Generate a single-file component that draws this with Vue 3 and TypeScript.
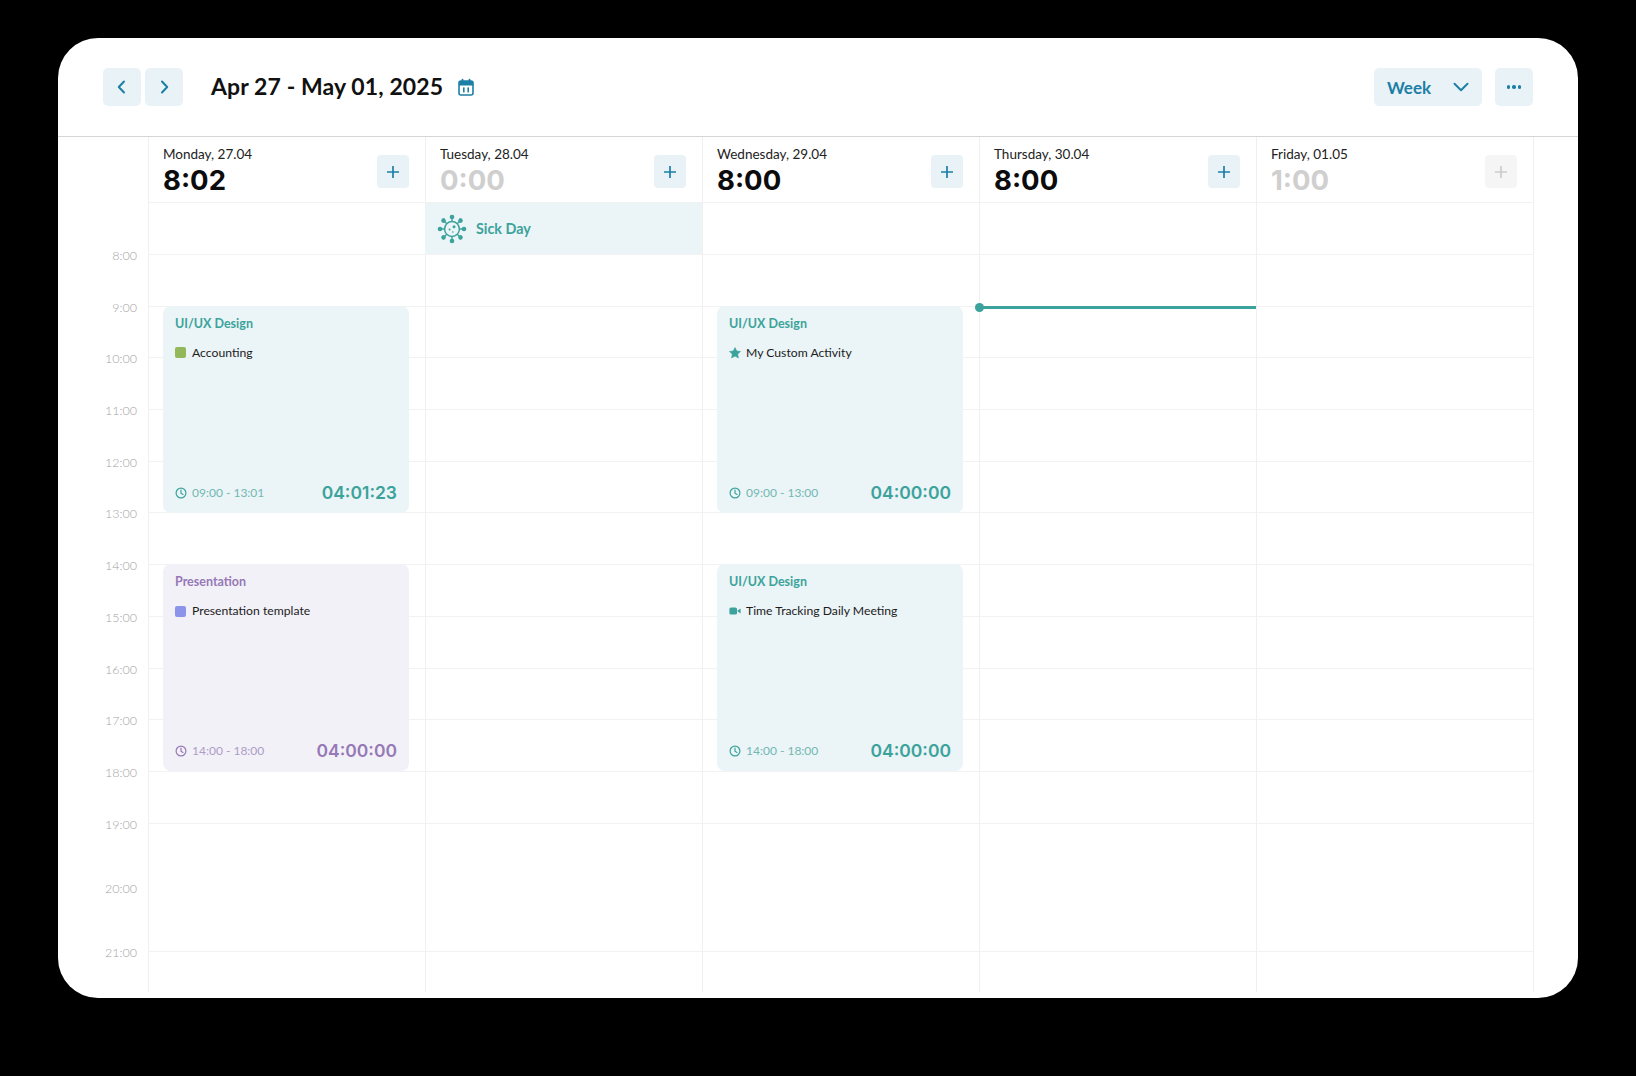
<script setup lang="ts">
interface IRow {
  label: string,
  height: number,
  line: boolean
}

interface IEvent {
  project: string,
  activity: string,
  icon: 'square' | 'star' | 'video',
  iconColor?: string,
  range: string,
  total: string,
  tone: 'teal' | 'purple',
  row: number
}

interface IDay {
  name: string,
  total: string,
  muted?: boolean,
  locked?: boolean,
  sick?: boolean,
  now?: number,
  events: IEvent[]
}

const rows: IRow[] = [
  ...[8, 9, 10, 11, 12, 13, 14, 15, 16, 17, 18].map(h => ({ label: `${h}:00`, height: 51.7, line: true })),
  { label: '19:00', height: 64.4, line: false },
  { label: '20:00', height: 64.4, line: true },
  { label: '21:00', height: 40, line: false }
]
const slot_template = rows.map(r => `${r.height}px`).join(' ')

const days: IDay[] = [
  {
    name: 'Monday, 27.04',
    total: '8:02',
    events: [
      { project: 'UI/UX Design', activity: 'Accounting', icon: 'square', iconColor: '#92b85a', range: '09:00 - 13:01', total: '04:01:23', tone: 'teal', row: 2 },
      { project: 'Presentation', activity: 'Presentation template', icon: 'square', iconColor: '#8b94e8', range: '14:00 - 18:00', total: '04:00:00', tone: 'purple', row: 7 }
    ]
  },
  { name: 'Tuesday, 28.04', total: '0:00', muted: true, sick: true, events: [] },
  {
    name: 'Wednesday, 29.04',
    total: '8:00',
    events: [
      { project: 'UI/UX Design', activity: 'My Custom Activity', icon: 'star', range: '09:00 - 13:00', total: '04:00:00', tone: 'teal', row: 2 },
      { project: 'UI/UX Design', activity: 'Time Tracking Daily Meeting', icon: 'video', range: '14:00 - 18:00', total: '04:00:00', tone: 'teal', row: 7 }
    ]
  },
  { name: 'Thursday, 30.04', total: '8:00', now: 2, events: [] },
  { name: 'Friday, 01.05', total: '1:00', muted: true, locked: true, events: [] }
]

const spikes = [0, 45, 90, 135, 180, 225, 270, 315]
</script>

<template>
  <div class="page">
    <div class="shell">
      <header class="topbar">
        <div class="nav">
          <button class="btn">
            <svg width="18" height="18" viewBox="0 0 18 18"><path d="M11 3.5 5.8 9l5.2 5.5" /></svg>
          </button>
          <button class="btn">
            <svg width="18" height="18" viewBox="0 0 18 18"><path d="M7 3.5 12.2 9 7 14.5" /></svg>
          </button>
        </div>
        <h1 class="range">Apr 27 - May 01, 2025</h1>
        <svg class="cal" width="16" height="18" viewBox="0 0 16 18">
          <rect x="1" y="3" width="14" height="14" rx="2" fill="none" stroke="#1c7fa6" stroke-width="1.6" />
          <rect x="1" y="3" width="14" height="4.5" fill="#1c7fa6" />
          <rect x="3.6" y="0.8" width="1.8" height="4" rx="0.9" fill="#1c7fa6" />
          <rect x="10.6" y="0.8" width="1.8" height="4" rx="0.9" fill="#1c7fa6" />
          <rect x="5" y="9.4" width="1.6" height="5" fill="#1c7fa6" />
          <rect x="9.4" y="9.4" width="1.6" height="5" fill="#1c7fa6" />
        </svg>
        <div class="spacer"></div>
        <button class="week">
          <span>Week</span>
          <svg width="18" height="18" viewBox="0 0 18 18"><path d="M2.5 5.8 9 12.2l6.5-6.4" /></svg>
        </button>
        <button class="btn more">
          <i></i><i></i><i></i>
        </button>
      </header>

      <div class="board">
        <div class="hours">
          <div v-for="r in rows" :key="r.label" class="hour" :style="{ height: r.height + 'px' }">{{ r.label }}</div>
        </div>

        <section v-for="day in days" :key="day.name" class="day">
          <div class="day-head">
            <div>
              <div class="day-name">{{ day.name }}</div>
              <div class="day-total" :class="{ muted: day.muted }">{{ day.total }}</div>
            </div>
            <button class="add" :class="{ locked: day.locked }">
              <svg width="14" height="14" viewBox="0 0 14 14"><path d="M7 1v12M1 7h12" /></svg>
            </button>
          </div>

          <div class="all-day" :class="{ sick: day.sick }">
            <template v-if="day.sick">
              <svg class="virus" width="30" height="30" viewBox="0 0 30 30">
                <circle cx="15" cy="15" r="7.4" fill="none" stroke="#3ca39c" stroke-width="1.5" />
                <g v-for="a in spikes" :key="a" :transform="`rotate(${a} 15 15)`">
                  <path d="M15 7.6V3.5" stroke="#3ca39c" stroke-width="1.4" />
                  <circle cx="15" cy="3" r="2.3" fill="#3ca39c" />
                </g>
                <circle cx="17" cy="12.8" r="1.5" fill="#3ca39c" />
                <circle cx="12.6" cy="15.6" r="1" fill="#3ca39c" />
                <circle cx="15.8" cy="18" r="0.8" fill="#3ca39c" />
              </svg>
              <span>Sick Day</span>
            </template>
          </div>

          <div class="slots" :style="{ gridTemplateRows: slot_template }">
            <div
              v-for="(r, i) in rows"
              :key="r.label"
              class="slot"
              :class="{ line: r.line }"
              :style="{ gridRow: i + 1 }"
            ></div>

            <article
              v-for="ev in day.events"
              :key="ev.row"
              class="event"
              :class="ev.tone"
              :style="{ gridRow: `${ev.row} / span 5` }"
            >
              <div class="project">{{ ev.project }}</div>
              <div class="activity">
                <span v-if="ev.icon === 'square'" class="swatch" :style="{ background: ev.iconColor }"></span>
                <svg v-else-if="ev.icon === 'star'" class="glyph" width="12" height="12" viewBox="0 0 12 12">
                  <path d="M6 .6 7.7 4l3.8.5-2.8 2.6.7 3.8L6 9.1l-3.4 1.8.7-3.8L.5 4.5 4.3 4z" stroke="#3ca39c" stroke-width=".6" stroke-linejoin="round" fill="#3ca39c" />
                </svg>
                <svg v-else class="glyph" width="12" height="12" viewBox="0 0 12 12">
                  <rect x="0.4" y="2.4" width="7.6" height="7.2" rx="1.6" fill="#3ca39c" />
                  <path d="M8.6 5.4 11.6 3.4v5.2L8.6 6.6z" fill="#3ca39c" />
                </svg>
                <span>{{ ev.activity }}</span>
              </div>
              <div class="foot">
                <svg class="clock" width="12" height="12" viewBox="0 0 12 12">
                  <circle cx="6" cy="6" r="4.9" />
                  <path d="M6 3v3.2l2 1.2" />
                </svg>
                <span class="time">{{ ev.range }}</span>
                <span class="total">{{ ev.total }}</span>
              </div>
            </article>

            <div v-if="day.now" class="now" :style="{ gridRow: day.now }"></div>
          </div>
        </section>
      </div>
    </div>
  </div>
</template>

<style>
body {
  background: #000;
}
</style>

<style scoped>
.page {
  height: 1076px;
  box-sizing: border-box;
  padding: 38px 58px 0 58px;
  font-family: Lato, "Open Sans", sans-serif;
  color: #111;
}
.shell {
  height: 960px;
  background: #fff;
  border-radius: 40px;
  overflow: hidden;
}
button {
  border: 0;
  padding: 0;
  font: inherit;
  cursor: pointer;
}
.topbar {
  display: flex;
  align-items: center;
  height: 99px;
  box-sizing: border-box;
  padding: 0 45px 0 45px;
  border-bottom: 1px solid #d4d7d9;
}
.nav {
  display: flex;
  gap: 4px;
}
.btn {
  width: 38px;
  height: 38px;
  border-radius: 5px;
  background: #e9f2f7;
  display: flex;
  align-items: center;
  justify-content: center;
}
.btn path, .week path {
  fill: none;
  stroke: #1c7fa6;
  stroke-width: 2;
  stroke-linecap: round;
  stroke-linejoin: round;
}
.range {
  margin: 0 0 2px 28px;
  font-size: 23px;
  font-weight: 700;
  line-height: 1;
  letter-spacing: 0.1px;
  color: #111;
}
.cal {
  margin-left: 15px;
}
.spacer {
  flex: 1;
}
.week {
  width: 108px;
  height: 38px;
  border-radius: 5px;
  background: #e9f2f7;
  display: flex;
  align-items: center;
  justify-content: space-between;
  box-sizing: border-box;
  padding: 0 12px 0 13px;
  color: #1c7fa6;
  font-size: 17px;
  font-weight: 700;
}
.more {
  margin-left: 13px;
  gap: 2px;
}
.more i {
  width: 3.4px;
  height: 3.4px;
  border-radius: 50%;
  background: #1c7fa6;
}
.board {
  display: flex;
}
.hours {
  width: 90px;
  box-sizing: border-box;
  padding: 112px 11px 0 0;
  text-align: right;
  font-size: 12.5px;
  line-height: 14px;
  color: #a4a4a4;
  font-weight: 300;
}
.day {
  width: 277px;
  border-left: 1px solid #f0f0f0;
  box-sizing: border-box;
}
.day:last-child {
  width: 278px;
  border-right: 1px solid #f0f0f0;
}
.day-head {
  height: 66px;
  box-sizing: border-box;
  padding: 9px 16px 0 14px;
  display: flex;
  justify-content: space-between;
  border-bottom: 1px solid #f2f2f2;
}
.day-name {
  font-size: 13.5px;
  line-height: 17px;
  color: #222;
}
.day-total {
  margin-top: 2px;
  font-family: Inter, sans-serif;
  font-size: 27.5px;
  font-weight: 700;
  line-height: 30px;
  color: #0c0c0c;
}
.day-total.muted {
  color: #cfcfcf;
}
.add {
  margin-top: 9px;
  width: 32px;
  height: 33px;
  border-radius: 4px;
  background: #e9f2f7;
  display: flex;
  align-items: center;
  justify-content: center;
}
.add path {
  fill: none;
  stroke: #1c7fa6;
  stroke-width: 1.7;
}
.add.locked {
  background: #f5f5f5;
}
.add.locked path {
  stroke: #cccccc;
}
.all-day {
  height: 52px;
  box-sizing: border-box;
  border-bottom: 1px solid #f2f2f2;
  display: flex;
  align-items: center;
  gap: 9px;
  padding-left: 11px;
  font-size: 14.3px;
  font-weight: 700;
  color: #3ca39c;
}
.all-day.sick {
  background: #ebf4f6;
  margin-left: -1px;
  padding-left: 12px;
}
.slots {
  display: grid;
  grid-template-columns: 1fr;
}
.slot {
  grid-column: 1;
  box-sizing: border-box;
}
.slot.line {
  border-bottom: 1px solid #f2f2f2;
}
.event {
  grid-column: 1;
  z-index: 1;
  margin: -1px 16px 0 14px;
  height: 207px;
  border-radius: 8px;
  box-sizing: border-box;
  padding: 10px 12px 10px 12px;
  display: flex;
  flex-direction: column;
}
.event.teal {
  background: #ebf4f6;
  --tone: #3ca39c;
  --soft: #72b8b3;
}
.event.purple {
  background: #f3f1f8;
  --tone: #9679b6;
  --soft: #ad9cc6;
}
.project {
  font-size: 12.5px;
  font-weight: 700;
  line-height: 16px;
  color: var(--tone);
}
.activity {
  margin-top: 13px;
  display: flex;
  align-items: center;
  gap: 6px;
  font-size: 12.2px;
  line-height: 16px;
  color: #1c1c1c;
}
.swatch {
  width: 11px;
  height: 11px;
  border-radius: 2px;
}
.glyph {
  margin-right: -1px;
}
.foot {
  margin-top: auto;
  display: flex;
  align-items: center;
  gap: 5px;
  color: var(--soft);
  font-size: 12px;
  line-height: 20px;
}
.clock {
  fill: none;
  stroke: var(--tone);
  stroke-width: 1.2;
  stroke-linecap: round;
}
.total {
  margin-left: auto;
  font-family: Inter, sans-serif;
  font-size: 17.5px;
  font-weight: 600;
  color: var(--tone);
}
.now {
  grid-column: 1;
  align-self: start;
  z-index: 1;
  height: 3px;
  margin: -1px 0 0 -1px;
  background: #3ca39c;
  position: relative;
}
.now::before {
  content: '';
  position: absolute;
  left: -4px;
  top: -3px;
  width: 9px;
  height: 9px;
  border-radius: 50%;
  background: #3ca39c;
}
</style>
